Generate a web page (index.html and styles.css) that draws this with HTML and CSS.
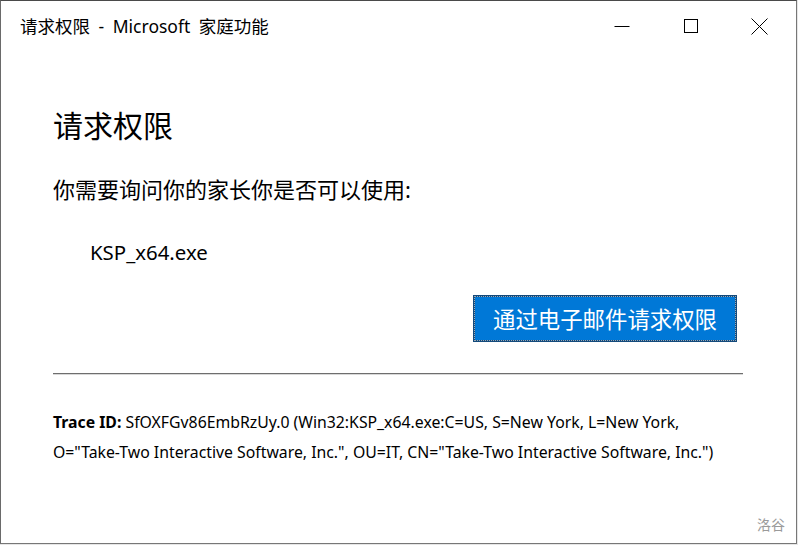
FILE: index.html
```html
<!DOCTYPE html>
<html lang="zh-CN">
<head>
<meta charset="utf-8">
<title>请求权限 - Microsoft 家庭功能</title>
<link rel="stylesheet" href="styles.css">
</head>
<body>
<div class="window">
  <div class="titlebar">
    <div class="title">请求权限 - Microsoft 家庭功能</div>
    <div class="controls">
      <div class="ctl"><svg width="16" height="16" viewBox="0 0 16 16"><path d="M0.5 8.5H15.5" stroke="#000" stroke-width="1" fill="none"/></svg></div>
      <div class="ctl"><svg width="16" height="16" viewBox="0 0 16 16"><rect x="1.5" y="1.5" width="13" height="13" stroke="#000" stroke-width="1" fill="none"/></svg></div>
      <div class="ctl"><svg width="17" height="17" viewBox="0 0 17 17"><path d="M0.5 0.5L16.5 16.5M16.5 0.5L0.5 16.5" stroke="#000" stroke-width="1" fill="none"/></svg></div>
    </div>
  </div>
  <div class="content">
    <h1 class="heading">请求权限</h1>
    <p class="prompt">你需要询问你的家长你是否可以使用:</p>
    <p class="app">KSP_x64.exe</p>
    <div class="actions">
      <button class="btn">通过电子邮件请求权限</button>
    </div>
    <div class="rule"></div>
    <p class="trace"><b>Trace ID:</b> SfOXFGv86EmbRzUy.0 (Win32:KSP_x64.exe:C=US, S=New York, L=New York,<br>O="Take-Two Interactive Software, Inc.", OU=IT, CN="Take-Two Interactive Software, Inc.")</p>
  </div>
  <div class="watermark">洛谷</div>
</div>
</body>
</html>
```
FILE: styles.css
```css
html, body {
  margin: 0;
  padding: 0;
  background: #e6e6e6;
}
body {
  width: 798px;
  height: 545px;
  overflow: hidden;
  font-family: "Noto Sans", "Noto Sans CJK SC", sans-serif;
  color: #000;
}
.window {
  position: relative;
  box-sizing: border-box;
  width: 797px;
  height: 544px;
  background: #fff;
  border-left: 1px solid #6a6a6a;
  border-top: 1px solid #4a4a4a;
  border-right: 1px solid #777;
  border-bottom: 1px solid #777;
  display: flex;
  flex-direction: column;
}
.titlebar {
  height: 50px;
  display: flex;
  align-items: center;
  justify-content: space-between;
  padding-left: 19px;
}
.title {
  font-size: 17.5px;
  font-family: "Noto Sans", "Noto Sans CJK SC", sans-serif;
  line-height: 22px;
  word-spacing: 4px;
}
.controls {
  display: flex;
  height: 50px;
  padding-right: 2px;
}
.ctl {
  width: 69px;
  height: 50px;
  display: flex;
  align-items: center;
  justify-content: center;
}
.content {
  padding: 0 53px 0 52px;
}
.heading {
  margin: 55px 0 0;
  font-weight: normal;
  font-size: 30px;
  line-height: 40px;
}
.prompt {
  margin: 28px 0 0;
  font-size: 22px;
  line-height: 30px;
}
.app {
  margin: 33px 0 0;
  padding-left: 37px;
  font-size: 20.4px;
  line-height: 30px;
}
.actions {
  display: flex;
  justify-content: flex-end;
  margin-top: 28px;
  padding-right: 6px;
}
.btn {
  box-sizing: border-box;
  width: 264px;
  height: 47px;
  background: #0078d7;
  color: #fff;
  border: 2px solid #134a7c;
  outline: 1px dotted #9aa8b4;
  outline-offset: -2px;
  font-family: "Noto Sans", "Noto Sans CJK SC", sans-serif;
  font-size: 22.4px;
  padding: 0;
}
.rule {
  margin-top: 31px;
  height: 1px;
  background: #6e6e6e;
  border-bottom: 1px solid #d8d8d8;
}
.trace {
  margin: 32px 0 0;
  font-size: 15.8px;
  line-height: 30px;
}
.trace b {
  font-weight: bold;
}
.watermark {
  position: absolute;
  right: 11px;
  bottom: 9px;
  font-size: 14px;
  color: #9a9a9a;
  font-family: "Noto Sans CJK SC", sans-serif;
}
```
